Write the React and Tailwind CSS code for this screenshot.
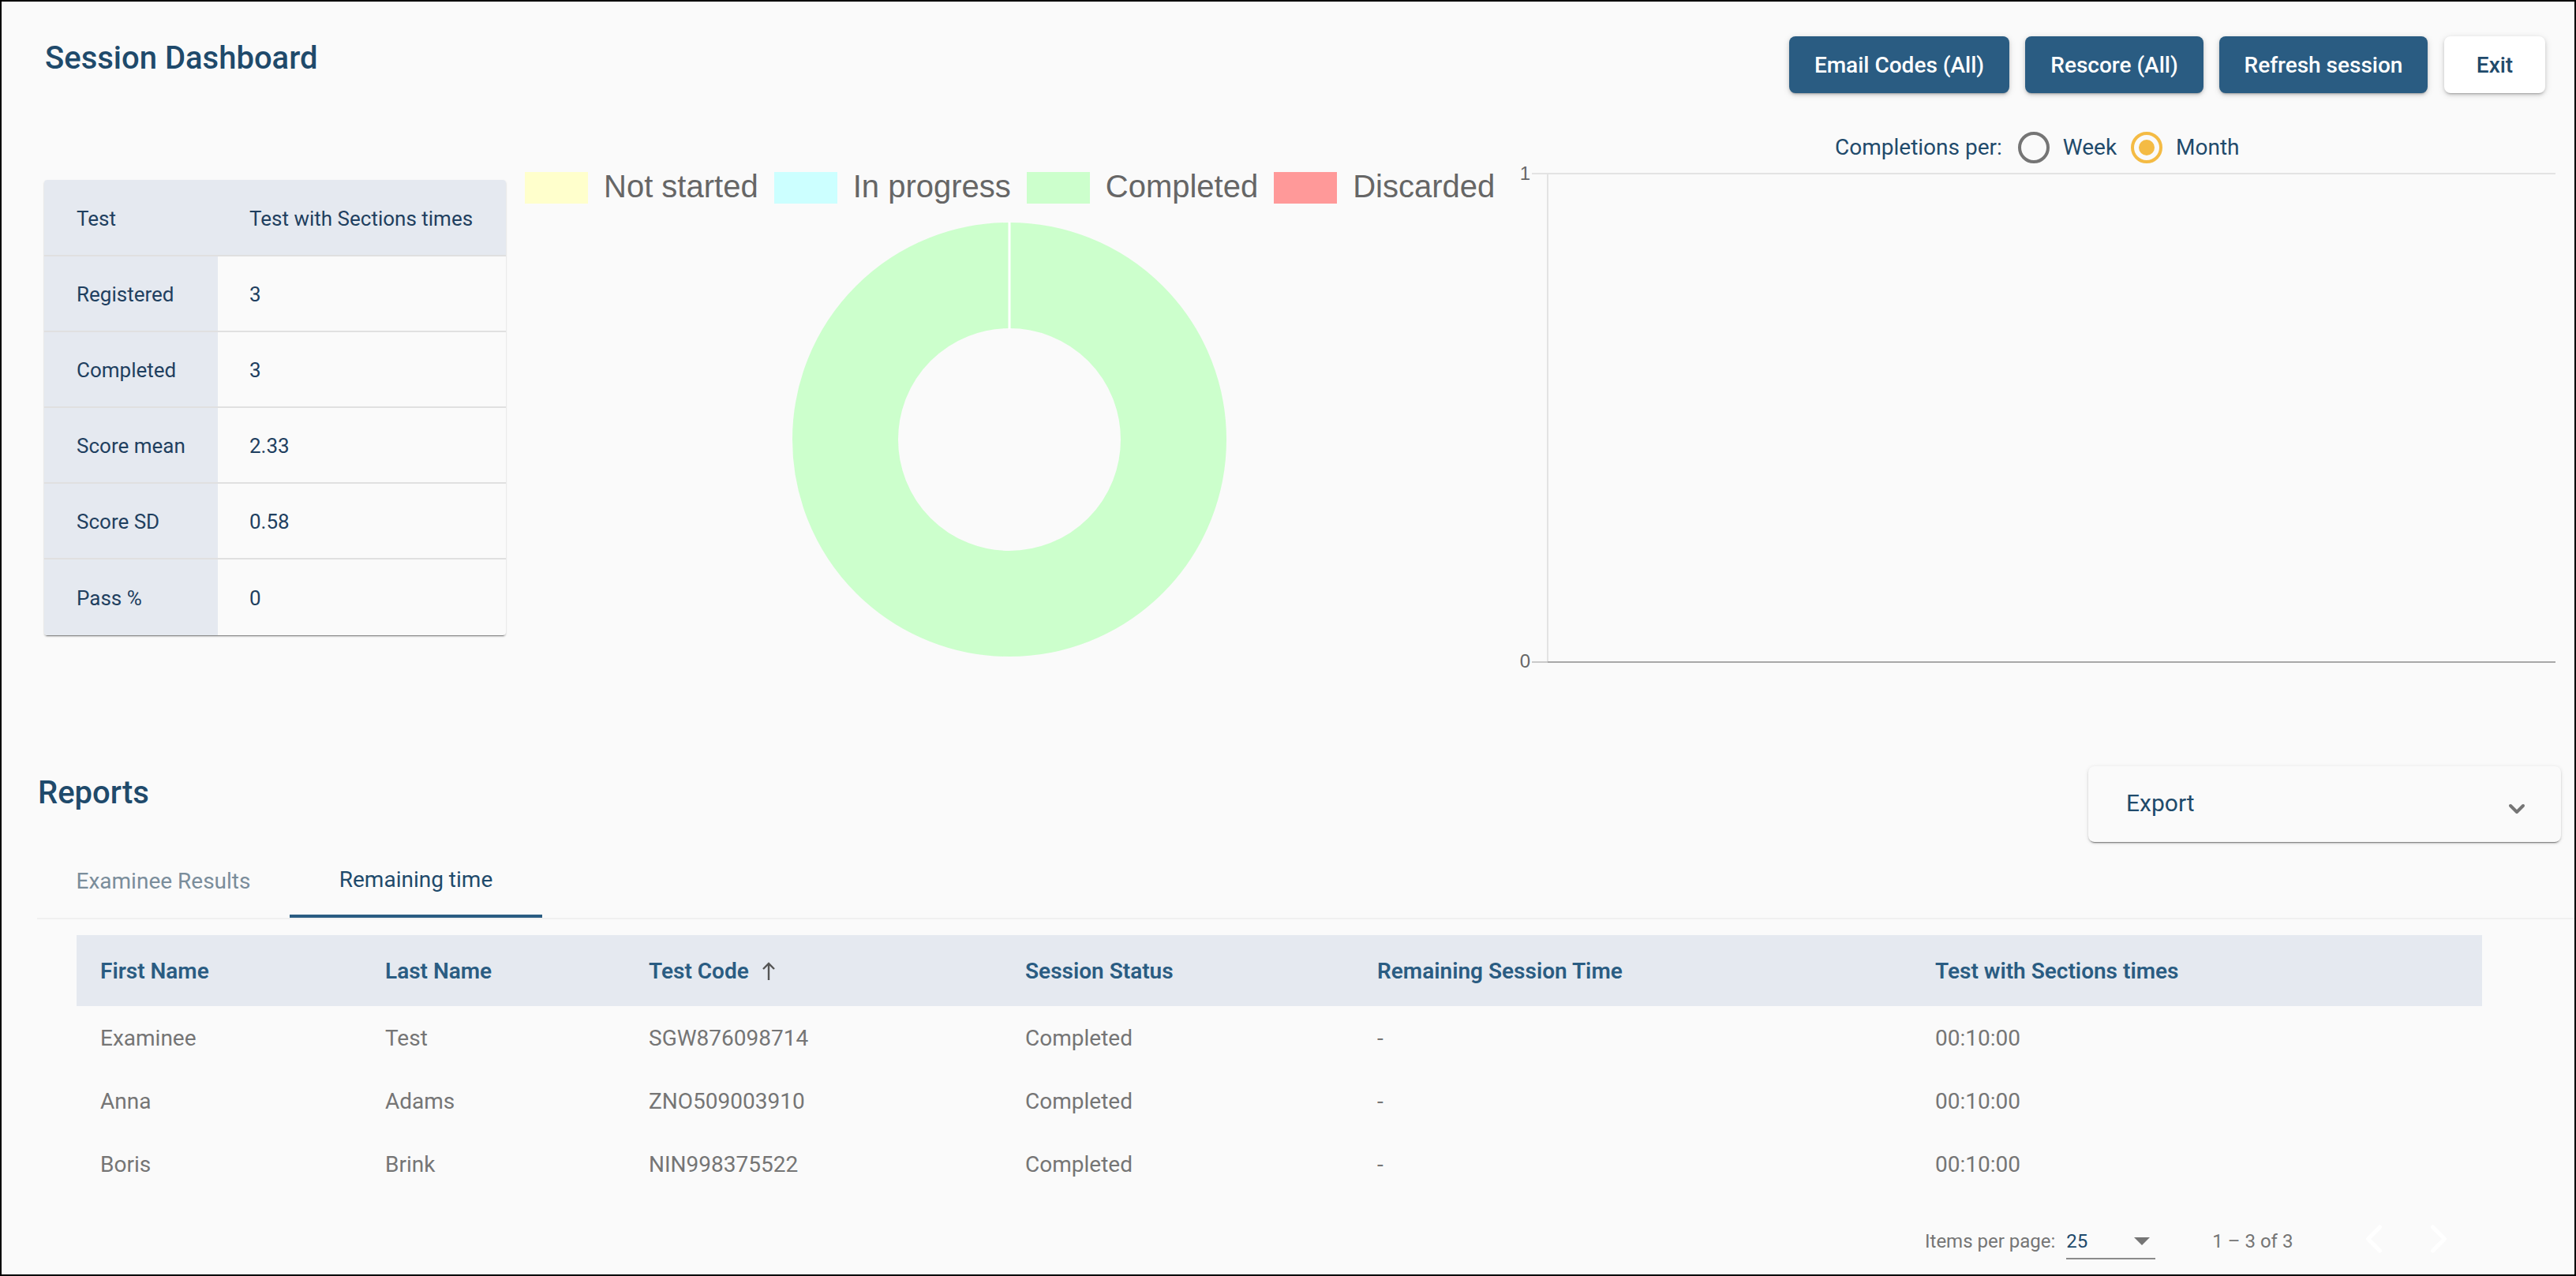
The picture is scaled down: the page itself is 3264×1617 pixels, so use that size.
import { ChevronDown, ChevronLeft, ChevronRight } from 'lucide-react';

const STATS = [
  ['Registered', '3'],
  ['Completed', '3'],
  ['Score mean', '2.33'],
  ['Score SD', '0.58'],
  ['Pass %', '0'],
];

const LEGEND = [
  { label: 'Not started', box: 'bg-[#ffffcc]' },
  { label: 'In progress', box: 'bg-[#ccffff]' },
  { label: 'Completed', box: 'bg-[#ccffcc]' },
  { label: 'Discarded', box: 'bg-[#ff9999]' },
];

const COLUMNS = [
  { label: 'First Name', width: 'w-[361px]' },
  { label: 'Last Name', width: 'w-[334px]' },
  { label: 'Test Code', width: 'w-[477px]', sorted: true },
  { label: 'Session Status', width: 'w-[446px]' },
  { label: 'Remaining Session Time', width: 'w-[707px]' },
  { label: 'Test with Sections times', width: 'w-[723px]' },
];

const ROWS = [
  ['Examinee', 'Test', 'SGW876098714', 'Completed', '-', '00:10:00'],
  ['Anna', 'Adams', 'ZNO509003910', 'Completed', '-', '00:10:00'],
  ['Boris', 'Brink', 'NIN998375522', 'Completed', '-', '00:10:00'],
];

function HeaderButton({ children, primary, width }) {
  const color = primary ? 'bg-[#2a5c82] text-white' : 'bg-white text-[#1f4a6b]';
  return (
    <button className={`h-[72px] pt-[2px] rounded-[8px] text-[28px] font-medium shadow-[0_3px_2px_-2px_rgba(0,0,0,.2),0_2px_4px_0_rgba(0,0,0,.14),0_2px_10px_0_rgba(0,0,0,.12)] ${width} ${color}`}>
      {children}
    </button>
  );
}

function Radio({ label, checked }) {
  return (
    <div className="flex items-center">
      <div className={`w-[40px] h-[40px] rounded-full border-[4px] flex items-center justify-center ${checked ? 'border-[#f4bb44]' : 'border-[#757575]'}`}>
        {checked && <div className="w-[20px] h-[20px] rounded-full bg-[#f4bb44]" />}
      </div>
      <span className="ml-[17px] text-[28px] text-[#1f4a6b]">{label}</span>
    </div>
  );
}

function StatsTable() {
  return (
    <div className="w-[585px] ml-[54px] mt-[63px] rounded-[4px] overflow-hidden text-[26px] text-[#1f3f5f] shadow-[0_3px_1px_-2px_rgba(0,0,0,.35),0_2px_2px_0_rgba(0,0,0,.14),0_1px_3px_0_rgba(0,0,0,.08)]">
      <div className="flex h-[97px] pt-[3px] items-center bg-[#e5e9f0] border-b-2 border-[#e0e0e0]">
        <div className="w-[220px] pl-[41px]">Test</div>
        <div className="pl-[40px]">Test with Sections times</div>
      </div>
      {STATS.map(([label, value], i) => (
        <div key={label} className={`flex h-[96px] ${i < STATS.length - 1 ? 'border-b-2 border-[#e0e0e0]' : ''}`}>
          <div className="w-[220px] pl-[41px] pt-[2px] flex items-center bg-[#e5e9f0]">{label}</div>
          <div className="pl-[40px] pt-[2px] flex items-center">{value}</div>
        </div>
      ))}
    </div>
  );
}

function Donut() {
  return (
    <svg width="560" height="560" viewBox="0 0 560 560" className="block mt-[19px] ml-[334px]">
      <circle cx="280" cy="280" r="208" fill="none" stroke="#ccffcc" strokeWidth="134" />
      <line x1="280" y1="4" x2="280" y2="140" stroke="#ffffff" strokeWidth="3" />
    </svg>
  );
}

function LineChart() {
  return (
    <svg width="1367" height="650" viewBox="0 0 1367 650" className="block -mt-[2px]" style={{ fontFamily: '"Liberation Sans", Arial, sans-serif' }}>
      <line x1="46" y1="15" x2="1343" y2="15" stroke="#e3e3e3" strokeWidth="2" />
      <line x1="66" y1="15" x2="66" y2="634" stroke="#e3e3e3" strokeWidth="2" />
      <line x1="46" y1="634" x2="66" y2="634" stroke="#c9c9c9" strokeWidth="2" />
      <line x1="66" y1="634" x2="1343" y2="634" stroke="#a8a8a8" strokeWidth="2" />
      <text x="44" y="23" textAnchor="end" fontSize="24" fill="#666666">1</text>
      <text x="44" y="641" textAnchor="end" fontSize="24" fill="#666666">0</text>
    </svg>
  );
}

function SortArrow() {
  return (
    <svg width="18" height="24" viewBox="0 0 18 24" className="ml-[16px]">
      <path d="M9 23V2M2 9l7-7 7 7" fill="none" stroke="#555555" strokeWidth="2.4" />
    </svg>
  );
}

export default function App() {
  return (
    <div className="w-[3264px] h-[1617px] border-2 border-black bg-[#fafafa] overflow-hidden font-['Roboto',sans-serif]">
      <div className="h-[163px] flex justify-between items-start pl-[55px] pr-[37px]">
        <h1 className="mt-[48px] text-[40px] leading-[48px] font-medium text-[#1f4a6b]">Session Dashboard</h1>
        <div className="mt-[44px] flex gap-[20px]">
          <HeaderButton primary width="w-[279px]">Email Codes (All)</HeaderButton>
          <HeaderButton primary width="w-[226px]">Rescore (All)</HeaderButton>
          <HeaderButton primary width="w-[264px]">Refresh session</HeaderButton>
          <HeaderButton width="w-[128px] ml-[1px]">Exit</HeaderButton>
        </div>
      </div>

      <div className="h-[804px] flex items-start">
        <StatsTable />
        <div className="ml-[24px] mt-[51px] w-[1230px]">
          <div className="flex gap-[20px] font-['Liberation_Sans',Arial,sans-serif] text-[40px] leading-[40px] text-[#666666]">
            {LEGEND.map(item => (
              <div key={item.label} className="flex gap-[20px]">
                <div className={`w-[80px] h-[40px] mt-[2px] ${item.box}`} />
                <span>{item.label}</span>
              </div>
            ))}
          </div>
          <Donut />
        </div>
        <div>
          <div className="h-[40px] mt-[2px] flex items-center pl-[430px] gap-[10px]">
            <span className="text-[28px] text-[#1f4a6b] mr-[10px]">Completions per:</span>
            <Radio label="Week" />
            <div className="ml-[8px]">
              <Radio label="Month" checked />
            </div>
          </div>
          <LineChart />
        </div>
      </div>

      <div className="flex justify-between items-start pl-[46px] pr-[17px]">
        <h2 className="mt-[12px] text-[40px] leading-[48px] font-medium text-[#1f4a6b]">Reports</h2>
        <div className="w-[599px] h-[96px] mt-[2px] px-[48px] flex items-center justify-between rounded-[8px] bg-[#fafafa] text-[30px] text-[#1f4a6b] shadow-[0_3px_1px_-2px_rgba(0,0,0,.35),0_2px_2px_0_rgba(0,0,0,.14),0_1px_5px_0_rgba(0,0,0,.12)]">
          <span className="-mt-[4px]">Export</span>
          <ChevronDown size={32} strokeWidth={3} className="text-[#757575] -mr-[8px] mt-[12px]" />
        </div>
      </div>

      <div className="ml-[45px] flex border-b-2 border-[#f0f0f0] text-[28px]">
        <div className="w-[320px] h-[96px] pt-[3px] flex items-center justify-center text-[#7a8d9b]">Examinee Results</div>
        <div className="w-[320px] h-[96px] pt-[3px] flex items-center justify-center text-[#1f4a6b] border-b-4 border-[#2a5c82]">Remaining time</div>
      </div>

      <table className="ml-[95px] mt-[20px] w-[3048px] table-fixed border-collapse text-[28px]">
        <thead>
          <tr className="h-[90px] bg-[#e5e9f0]">
            {COLUMNS.map(col => (
              <th key={col.label} className={`${col.width} pl-[30px] pt-[2px] text-left font-semibold text-[#2a5c82]`}>
                <span className="inline-flex items-center">
                  {col.label}
                  {col.sorted && <SortArrow />}
                </span>
              </th>
            ))}
          </tr>
        </thead>
        <tbody>
          {ROWS.map(row => (
            <tr key={row[2]} className="h-[80px]">
              {row.map((cell, i) => (
                <td key={i} className="pl-[30px] pt-[2px] text-[#757575]">{cell}</td>
              ))}
            </tr>
          ))}
        </tbody>
      </table>

      <div className="ml-[2437px] mt-[26px] flex items-start text-[24px] text-[#757575]">
        <span className="mt-[14px]">Items per page:</span>
        <div className="ml-[14px] w-[113px] h-[55px] border-b-2 border-[#8a8a8a] flex justify-between items-start pt-[14px]">
          <span className="text-[#1f4a6b]">25</span>
          <div className="mt-[13px] mr-[7px] w-0 h-0 border-x-[10px] border-x-transparent border-t-[10px] border-t-[#757575]" />
        </div>
        <span className="ml-[72px] mt-[14px]">1 – 3 of 3</span>
        <ChevronLeft size={60} strokeWidth={2} className="ml-[73px] -mt-[1px] text-[#ffffff]" />
        <ChevronRight size={60} strokeWidth={2} className="ml-[22px] -mt-[1px] text-[#ffffff]" />
      </div>
    </div>
  );
}
